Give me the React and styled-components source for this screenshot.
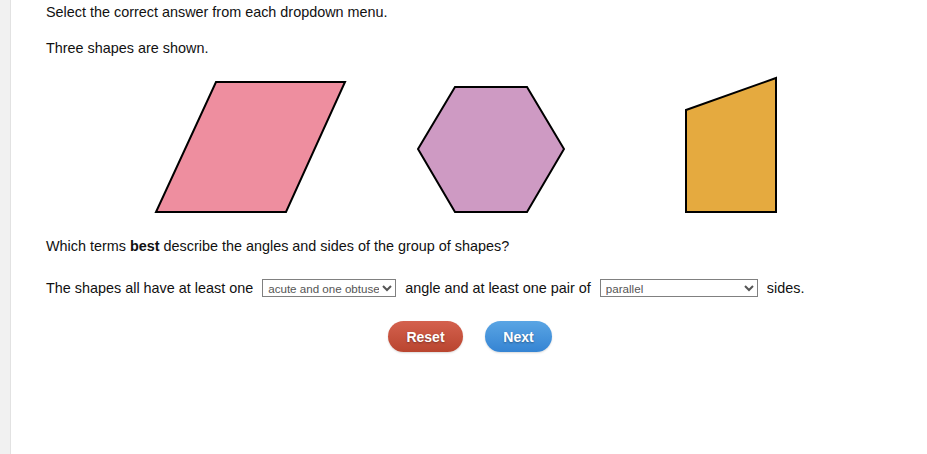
import React, { useState } from 'react';
import styled, { createGlobalStyle } from 'styled-components';

const GlobalStyle = createGlobalStyle`
  html, body {
    margin: 0;
    padding: 0;
    background: #fff;
  }
  body {
    font-family: "Liberation Sans", Arial, sans-serif;
    color: #111;
  }
`;

const Page = styled.div`
  display: flex;
  min-height: 454px;
`;

const Sidebar = styled.div`
  width: 10px;
  flex-shrink: 0;
  background: #f1f1f1;
  border-right: 1px solid #e2e2e2;
`;

const Main = styled.main`
  flex: 1;
  padding: 4px 0 0 35px;
  font-size: 14.4px;
  line-height: 16px;
`;

const Text = styled.p`
  margin: 0 0 ${({ gap }) => gap || 0}px;
`;

const ShapeRow = styled.div`
  display: grid;
  grid-template-columns: repeat(3, 240px);
  margin: 19px 0 0 84px;
  height: 140px;
`;

const ShapeCell = styled.div`
  display: flex;
  justify-content: center;
  align-items: center;
`;

const Question = styled.p`
  margin: 23px 0 0;
`;

const Sentence = styled.div`
  display: flex;
  align-items: center;
  gap: 9px;
  margin-top: 24px;
  height: 20px;
`;

const Dropdown = styled.select`
  width: ${({ w }) => w}px;
  height: 18px;
  font-family: "Liberation Sans", Arial, sans-serif;
  font-size: 11.6px;
  color: #555;
  background: #fff;
  border: 1px solid #808080;
  border-radius: 0;
  padding: 0 0 0 1px;
  margin: 0;
`;

const Actions = styled.div`
  display: flex;
  gap: 22px;
  margin: 23px 0 0 342px;
`;

const Pill = styled.button`
  height: 31px;
  width: ${({ w }) => w}px;
  border: none;
  border-radius: 16px;
  font-family: "Liberation Sans", Arial, sans-serif;
  font-size: 14px;
  font-weight: bold;
  color: #fff;
  text-shadow: 0 1px 2px rgba(0, 0, 0, 0.35);
  cursor: pointer;
  background: ${({ tone }) =>
    tone === 'red'
      ? 'linear-gradient(#d4614e, #b9452f)'
      : 'linear-gradient(#5aa5e4, #3584d3)'};
  box-shadow: 0 1px 2px rgba(0, 0, 0, 0.15);
`;

const Stroke = { stroke: '#000', strokeWidth: 2, strokeLinejoin: 'miter' };

const App = () => {
  const [angle, setAngle] = useState('acute and one obtuse');
  const [sides, setSides] = useState('parallel');

  return (
    <Page>
      <GlobalStyle />
      <Sidebar />
      <Main>
        <Text gap={20}>Select the correct answer from each dropdown menu.</Text>
        <Text>Three shapes are shown.</Text>

        <ShapeRow>
          <ShapeCell>
            <svg width="200" height="140" viewBox="0 0 200 140">
              <polygon points="66,7 195,7 136,137 6,137" fill="#ee8e9f" {...Stroke} />
            </svg>
          </ShapeCell>
          <ShapeCell>
            <svg width="150" height="140" viewBox="0 0 150 140">
              <polygon points="40,12 112,12 149,74 112,137 40,137 3,74" fill="#ce9ac3" {...Stroke} />
            </svg>
          </ShapeCell>
          <ShapeCell>
            <svg width="100" height="140" viewBox="0 0 100 140">
              <polygon points="6,35 96,3 96,137 6,137" fill="#e5aa3f" {...Stroke} />
            </svg>
          </ShapeCell>
        </ShapeRow>

        <Question>
          Which terms <b>best</b> describe the angles and sides of the group of shapes?
        </Question>

        <Sentence>
          <span>The shapes all have at least one</span>
          <Dropdown w={134} value={angle} onChange={(e) => setAngle(e.target.value)}>
            <option>acute and one obtuse</option>
            <option>right</option>
            <option>reflex</option>
          </Dropdown>
          <span>angle and at least one pair of</span>
          <Dropdown w={158} value={sides} onChange={(e) => setSides(e.target.value)}>
            <option>parallel</option>
            <option>perpendicular</option>
            <option>congruent</option>
          </Dropdown>
          <span>sides.</span>
        </Sentence>

        <Actions>
          <Pill tone="red" w={75}>Reset</Pill>
          <Pill tone="blue" w={67}>Next</Pill>
        </Actions>
      </Main>
    </Page>
  );
};

export default App;
